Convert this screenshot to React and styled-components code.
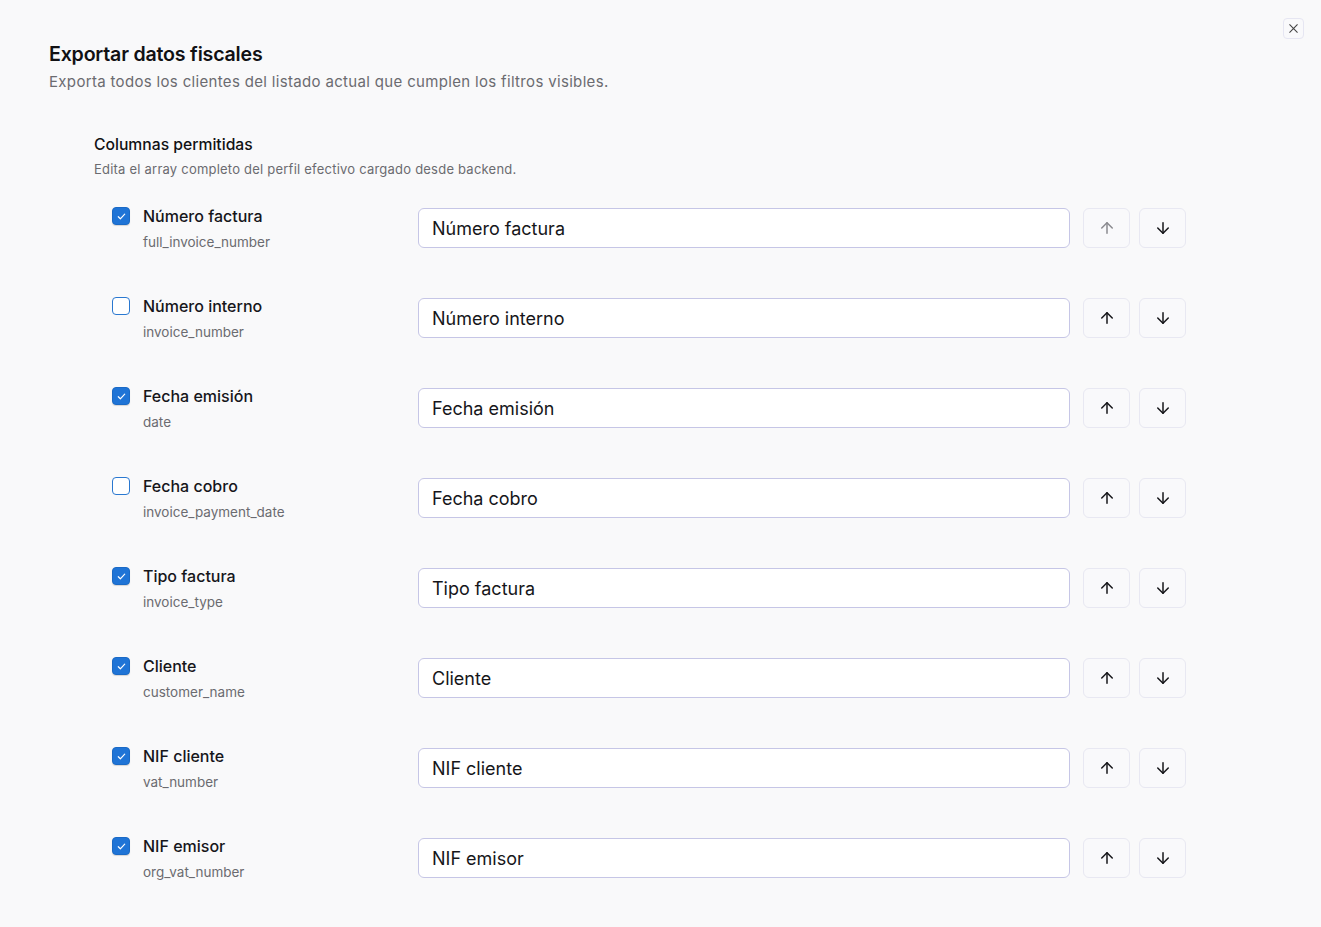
import React, { useState } from 'react';
import styled, { createGlobalStyle } from 'styled-components';

const GlobalStyle = createGlobalStyle`
  html, body {
    margin: 0;
    background: #f9f9fa;
    font-family: Inter, "Noto Sans", sans-serif;
    color: #111114;
  }
`;

const Page = styled.div`
  position: relative;
  padding: 42px 0 0 49px;
  min-height: 927px;
  box-sizing: border-box;
`;

const CloseButton = styled.button`
  position: absolute;
  top: 18px;
  left: 1283px;
  width: 21px;
  height: 21px;
  padding: 0;
  display: flex;
  align-items: center;
  justify-content: center;
  background: #f9f9fb;
  border: 1px solid #e6e6f2;
  border-radius: 4px;
  color: #444;
`;

const Title = styled.h2`
  margin: 0;
  font-size: 19.6px;
  font-weight: 600;
  line-height: 24px;
  letter-spacing: -0.2px;
`;

const Subtitle = styled.p`
  margin: 6px 0 0;
  font-size: 15px;
  line-height: 20px;
  letter-spacing: 0.33px;
  color: #6b6b70;
`;

const Section = styled.section`
  margin: 43px 0 0 45px;
  width: 1092px;
`;

const SectionTitle = styled.h3`
  margin: 0;
  font-size: 15.7px;
  font-weight: 500;
  line-height: 20px;
`;

const SectionDesc = styled.p`
  margin: 6px 0 0;
  font-size: 13px;
  line-height: 16px;
  letter-spacing: 0.22px;
  color: #6b6b70;
`;

const List = styled.div`
  margin-top: 31px;
  display: flex;
  flex-direction: column;
  gap: 48px;
`;

const Row = styled.div`
  display: grid;
  grid-template-columns: 306px 652px 60px 56px;
  padding-left: 18px;
  align-items: start;
`;

const LabelBlock = styled.label`
  display: grid;
  grid-template-columns: 18px 1fr;
  column-gap: 13px;
  row-gap: 9px;
  cursor: pointer;
`;

const Box = styled.span`
  width: 18px;
  height: 18px;
  margin-top: -1px;
  box-sizing: border-box;
  border-radius: 4px;
  display: flex;
  align-items: center;
  justify-content: center;
  background: ${p => (p.checked ? '#1f74d6' : '#fff')};
  border: 1.5px solid ${p => (p.checked ? '#1a6ac6' : '#2a78d0')};
  box-shadow: ${p => (p.checked ? '0 1px 1px rgba(0,0,0,.15)' : 'none')};
`;

const Name = styled.span`
  font-size: 16px;
  font-weight: 500;
  line-height: 18px;
  margin-top: -1px;
  color: #16161a;
`;

const Key = styled.span`
  grid-column: 2;
  font-size: 13.5px;
  line-height: 16px;
  color: #6b6b70;
`;

const TextInput = styled.input`
  height: 40px;
  box-sizing: border-box;
  border: 1px solid #c6c6e6;
  border-radius: 6px;
  background: #fff;
  padding: 0 13px;
  font-family: inherit;
  font-size: 18px;
  color: #16161a;
  outline: none;
`;

const MoveButton = styled.button`
  justify-self: end;
  width: 47px;
  height: 40px;
  box-sizing: border-box;
  border: 1px solid #e8e8f2;
  border-radius: 6px;
  background: #f9f9fb;
  display: flex;
  align-items: center;
  justify-content: center;
  padding: 0;
  color: ${p => (p.disabled ? '#8a8a8f' : '#16161a')};
`;

const Arrow = ({ up }) => (
  <svg width="18" height="18" viewBox="0 0 24 24" fill="none" stroke="currentColor" strokeWidth="2" strokeLinecap="round" strokeLinejoin="round">
    {up ? (
      <>
        <path d="M12 19V5" />
        <path d="M5 12l7-7 7 7" />
      </>
    ) : (
      <>
        <path d="M12 5v14" />
        <path d="M19 12l-7 7-7-7" />
      </>
    )}
  </svg>
);

const columns = [
  { name: 'Número factura', key: 'full_invoice_number', on: true },
  { name: 'Número interno', key: 'invoice_number', on: false },
  { name: 'Fecha emisión', key: 'date', on: true },
  { name: 'Fecha cobro', key: 'invoice_payment_date', on: false },
  { name: 'Tipo factura', key: 'invoice_type', on: true },
  { name: 'Cliente', key: 'customer_name', on: true },
  { name: 'NIF cliente', key: 'vat_number', on: true },
  { name: 'NIF emisor', key: 'org_vat_number', on: true },
  { name: 'Base imponible', key: 'subtotal', on: true },
];

export default function App() {
  const [items, setItems] = useState(columns);

  const toggle = i =>
    setItems(items.map((c, j) => (j === i ? { ...c, on: !c.on } : c)));

  const rename = (i, v) =>
    setItems(items.map((c, j) => (j === i ? { ...c, name: v } : c)));

  const move = (i, d) => {
    const next = [...items];
    const t = next[i];
    next[i] = next[i + d];
    next[i + d] = t;
    setItems(next);
  };

  return (
    <>
      <GlobalStyle />
      <Page>
        <CloseButton aria-label="Cerrar">
          <svg width="13" height="13" viewBox="0 0 24 24" fill="none" stroke="currentColor" strokeWidth="2" strokeLinecap="round">
            <path d="M5 5l14 14M19 5L5 19" />
          </svg>
        </CloseButton>
        <Title>Exportar datos fiscales</Title>
        <Subtitle>Exporta todos los clientes del listado actual que cumplen los filtros visibles.</Subtitle>
        <Section>
          <SectionTitle>Columnas permitidas</SectionTitle>
          <SectionDesc>Edita el array completo del perfil efectivo cargado desde backend.</SectionDesc>
          <List>
            {items.map((c, i) => (
              <Row key={c.key}>
                <LabelBlock onClick={() => toggle(i)}>
                  <Box checked={c.on}>
                    {c.on && (
                      <svg width="11" height="11" viewBox="0 0 24 24" fill="none" stroke="#fff" strokeWidth="2.6" strokeLinecap="round" strokeLinejoin="round">
                        <path d="M5 12.5l4.5 4.5L19 7" />
                      </svg>
                    )}
                  </Box>
                  <Name>{c.name}</Name>
                  <Key>{c.key}</Key>
                </LabelBlock>
                <TextInput value={c.name} onChange={e => rename(i, e.target.value)} />
                <MoveButton disabled={i === 0} onClick={() => move(i, -1)}>
                  <Arrow up />
                </MoveButton>
                <MoveButton disabled={i === items.length - 1} onClick={() => move(i, 1)}>
                  <Arrow />
                </MoveButton>
              </Row>
            ))}
          </List>
        </Section>
      </Page>
    </>
  );
}
